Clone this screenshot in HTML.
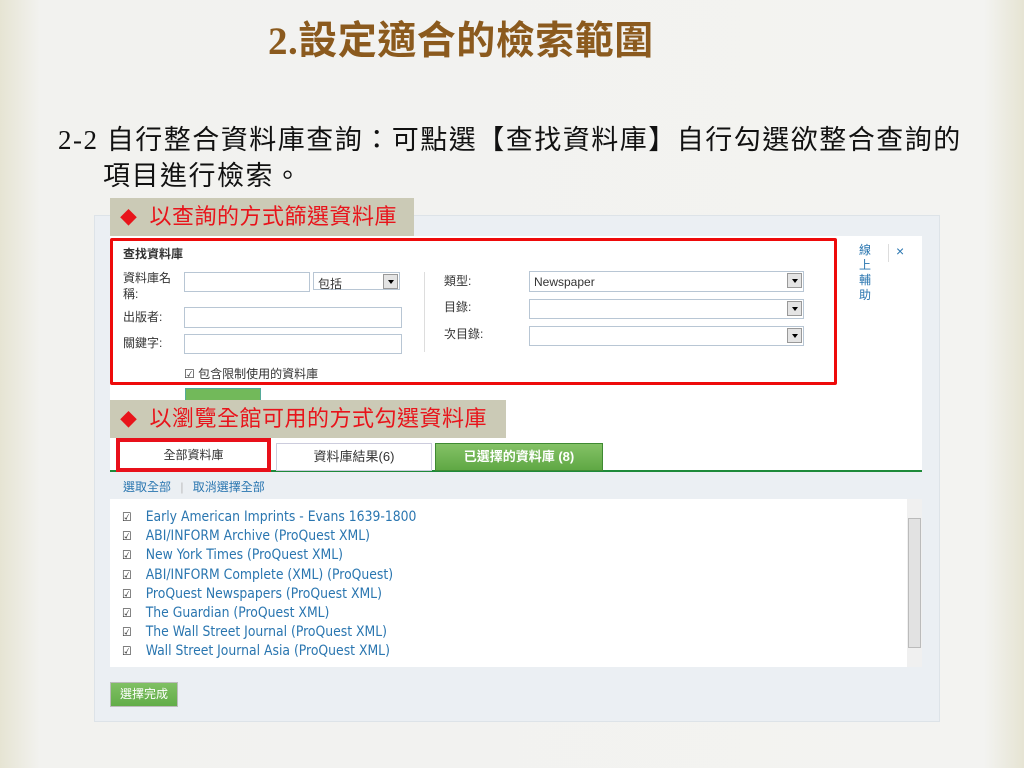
<!DOCTYPE html>
<html><head><meta charset="utf-8"><style>
*{margin:0;padding:0;box-sizing:border-box}
body{width:1024px;height:768px;overflow:hidden;position:relative;font-family:"Liberation Sans","Noto Sans CJK TC",sans-serif;background:linear-gradient(90deg,#e6e4d3 0,#f2f2ef 40px,#f3f3f1 984px,#e6e4d3 1024px)}
.abs{position:absolute}
.t{font-size:12px;color:#333}
.in{position:absolute;background:#fff;border:1px solid #b8c6d4}
.sel{position:absolute;background:#fff;border:1px solid #b8c6d4}
.sel i{position:absolute;right:1px;top:1px;width:15px;height:15px;background:#e4e4e4;border:1px solid #999}
.sel i:after{content:"";position:absolute;left:4px;top:5px;border:3px solid transparent;border-top:4px solid #000}
.lab{position:absolute;background:#cbcab6;color:#e8141b;font-size:22px;padding-left:10px;line-height:38px;letter-spacing:0.5px}
.lab b{font-size:17px;margin-right:12px}
.li{position:absolute;left:122px;font-size:13.8px;color:#2a76b0;font-family:"DejaVu Sans Condensed","DejaVu Sans",sans-serif}
.li:before{content:"☑";color:#333;margin-right:14px;font-size:12px}
</style></head><body>
<div class="abs" style="left:268px;top:10px;font-size:39px;font-weight:bold;color:#8b5a1e;font-family:'Liberation Serif','Noto Sans CJK TC',serif;letter-spacing:0.5px">2.設定適合的檢索範圍</div>
<div class="abs" style="left:58px;top:122px;font-size:27px;color:#111;line-height:36px;font-family:'Liberation Serif','Noto Sans CJK TC',serif;white-space:nowrap;letter-spacing:1.5px">2-2 自行整合資料庫查詢：可點選【查找資料庫】自行勾選欲整合查詢的<br><span style="padding-left:45px">項目進行檢索。</span></div>

<div class="abs" style="left:94px;top:215px;width:846px;height:507px;background:#ebeff3;border:1px solid #dde3e8"></div>
<div class="abs" style="left:110px;top:236px;width:812px;height:235px;background:#fff"></div>
<div class="abs" style="left:110px;top:470px;width:812px;height:2px;background:#1e8a3a"></div>
<div class="abs" style="left:110px;top:499px;width:797px;height:168px;background:#fff"></div>
<div class="abs" style="left:907px;top:499px;width:15px;height:168px;background:#f0f0f0"></div>
<div class="abs" style="left:908px;top:518px;width:13px;height:130px;background:#e2e2e2;border:1px solid #bbb"></div>

<div class="abs" style="left:110px;top:238px;width:727px;height:147px;border:3px solid #ee0a0a;border-radius:2px"></div>
<div class="abs t" style="left:123px;top:245px;font-weight:bold">查找資料庫</div>
<div class="abs t" style="left:123px;top:270px;line-height:16px">資料庫名<br>稱:</div>
<div class="in" style="left:184px;top:272px;width:126px;height:20px"></div>
<div class="sel" style="left:313px;top:272px;width:87px;height:18px"><span class="t" style="position:absolute;left:4px;top:2px">包括</span><i></i></div>
<div class="abs t" style="left:123px;top:308px">出版者:</div>
<div class="in" style="left:184px;top:307px;width:218px;height:21px"></div>
<div class="abs t" style="left:123px;top:334px">關鍵字:</div>
<div class="in" style="left:184px;top:334px;width:218px;height:20px"></div>
<div class="abs" style="left:424px;top:272px;width:1px;height:80px;background:#ddd"></div>
<div class="abs t" style="left:444px;top:272px">類型:</div>
<div class="abs t" style="left:444px;top:298px">目錄:</div>
<div class="abs t" style="left:444px;top:325px">次目錄:</div>
<div class="sel" style="left:529px;top:271px;width:275px;height:21px"><span class="t" style="position:absolute;left:4px;top:3px">Newspaper</span><i></i></div>
<div class="sel" style="left:529px;top:299px;width:275px;height:20px"><i></i></div>
<div class="sel" style="left:529px;top:326px;width:275px;height:20px"><i></i></div>
<div class="abs t" style="left:184px;top:365px">☑ 包含限制使用的資料庫</div>
<div class="abs" style="left:859px;top:243px;font-size:12px;color:#2a76b0;line-height:15px;width:14px">線上輔助</div>
<div class="abs" style="left:888px;top:244px;width:1px;height:18px;background:#ddd"></div>
<div class="abs" style="left:896px;top:243px;font-size:14px;color:#2a76b0">×</div>
<div class="abs" style="left:185px;top:388px;width:76px;height:14px;background:#72b95a;border:1px solid #5a9"></div>

<div class="lab" style="left:110px;top:198px;width:304px;height:38px"><b>◆</b>以查詢的方式篩選資料庫</div>
<div class="lab" style="left:110px;top:400px;width:396px;height:38px"><b>◆</b>以瀏覽全館可用的方式勾選資料庫</div>

<div class="abs t" style="left:116px;top:438px;width:155px;height:34px;border:4px solid #e8101a;background:#fff;text-align:center;line-height:26px">全部資料庫</div>
<div class="abs" style="left:276px;top:443px;width:156px;height:28px;border:1px solid #ccd;background:#fff;text-align:center;font-size:13px;line-height:26px;color:#333">資料庫結果(6)</div>
<div class="abs" style="left:435px;top:443px;width:168px;height:28px;background:linear-gradient(#84c266,#5fa844);border:1px solid #3f8a32;text-align:center;font-size:13px;line-height:26px;color:#fff;font-weight:bold">已選擇的資料庫 (8)</div>
<div class="abs" style="left:123px;top:478px;font-size:12px;color:#2a76b0">選取全部 <span style="color:#bbb;margin:0 6px">|</span> 取消選擇全部</div>

<div class="li" style="top:509px">Early American Imprints - Evans 1639-1800</div>
<div class="li" style="top:528px">ABI/INFORM Archive (ProQuest XML)</div>
<div class="li" style="top:547px">New York Times (ProQuest XML)</div>
<div class="li" style="top:567px">ABI/INFORM Complete (XML) (ProQuest)</div>
<div class="li" style="top:586px">ProQuest Newspapers (ProQuest XML)</div>
<div class="li" style="top:605px">The Guardian (ProQuest XML)</div>
<div class="li" style="top:624px">The Wall Street Journal (ProQuest XML)</div>
<div class="li" style="top:643px">Wall Street Journal Asia (ProQuest XML)</div>

<div class="abs" style="left:110px;top:682px;width:68px;height:25px;background:linear-gradient(#80c064,#62ad48);border:1px solid #bbb;color:#fff;font-size:12px;text-align:center;line-height:23px">選擇完成</div>
</body></html>
